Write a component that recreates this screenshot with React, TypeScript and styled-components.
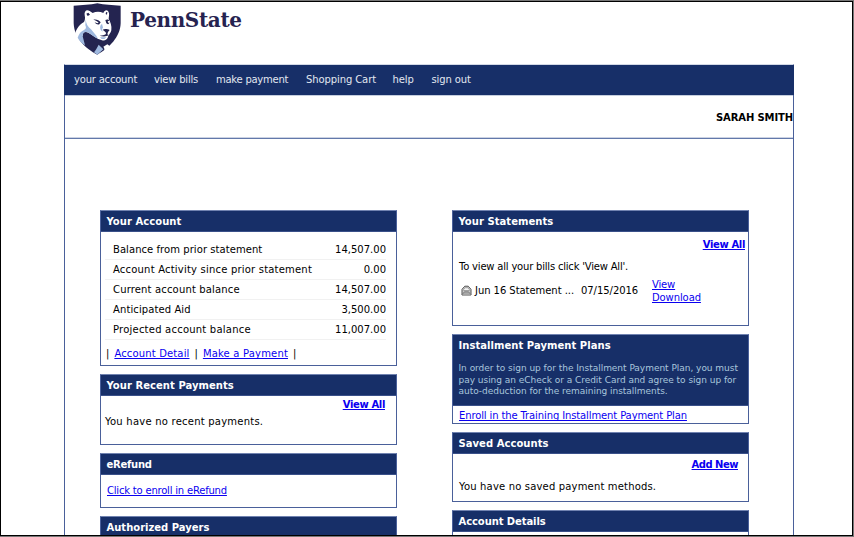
import React from 'react';
import styled, { createGlobalStyle, css } from 'styled-components';

const navy = '#172f68';
const edge = '#4a609a';

const GlobalStyle = createGlobalStyle`
  *, *::before, *::after { box-sizing: border-box; }
  html, body { margin: 0; padding: 0; background: #fff; overflow: hidden; }
  body {
    font-family: "DejaVu Sans", Verdana, sans-serif;
    font-size: 10px;
    line-height: 12px;
    color: #000;
  }
`;

const Frame = styled.div`
  height: 537px;
  border: 1px solid #777;
  border-left: 0;
`;

const Screen = styled.div`
  height: 535px;
  border: 1px solid #000;
  overflow: hidden;
  padding-left: 63px;
`;

const Brand = styled.header`
  display: flex;
  align-items: flex-start;
  height: 62px;
  padding-left: 9px;
`;

const Shield = styled.svg`
  width: 49px;
  height: 53px;
  flex: none;
`;

const Wordmark = styled.div`
  margin: 6px 0 0 8px;
  font: 700 20px/24px "DejaVu Serif", serif;
  letter-spacing: -0.36px;
  color: #262350;
`;

const Site = styled.div`
  width: 730px;
  height: 480px;
  border: 1px solid ${edge};
  border-top-color: #d3d9e6;
  border-bottom: 0;
`;

const Nav = styled.nav`
  display: flex;
  height: 30px;
  margin: 0 -1px;
  padding: 9px 0 0 10px;
  background: ${navy};
  color: #e3e8f0;
`;

const NavItem = styled.a<{ $width: number; $ls?: number }>`
  width: ${(p) => p.$width}px;
  letter-spacing: ${(p) => p.$ls ?? -0.2}px;
  white-space: nowrap;
`;

const UserBar = styled.div`
  height: 44px;
  padding-top: 16px;
  border-top: 1px solid #c5cede;
  border-bottom: 1px solid #6278aa;
  box-shadow: inset 0 -1px #ccd3e3;
  text-align: right;
  font-weight: 700;
  letter-spacing: -0.12px;
`;

const Columns = styled.main`
  display: grid;
  grid-template-columns: 297px 297px;
  column-gap: 55px;
  padding: 71px 0 0 35px;
`;

const Column = styled.div`
  display: flex;
  flex-direction: column;
  gap: 8px;
`;

const Panel = styled.section<{ $height: number }>`
  height: ${(p) => p.$height}px;
  border: 1px solid ${edge};
  border-top-color: #7183b0;
  flex: none;
`;

const PanelHead = styled.div<{ $height?: number }>`
  height: ${(p) => p.$height ?? 21}px;
  padding: 4px 0 0 5.5px;
  background: ${navy};
  border-bottom: 1px solid #3a5089;
  color: #fff;
`;

const Title = styled.h2<{ $ls?: number }>`
  margin: 0;
  font-size: 10px;
  line-height: 14px;
  font-weight: 700;
  letter-spacing: ${(p) => p.$ls ?? 0.05}px;
`;

const Note = styled.p`
  margin: 10px 0 0;
  font-size: 9px;
  line-height: 11.6px;
  letter-spacing: -0.03px;
  white-space: pre;
  color: #a9c6dc;
`;

const Line = styled.div<{ $top: number; $left?: number; $ls?: number }>`
  height: 12px;
  margin: ${(p) => p.$top}px 0 0 ${(p) => p.$left ?? 6}px;
  letter-spacing: ${(p) => p.$ls ?? 0}px;
  white-space: pre;
`;

const Link = styled.a<{ $ls?: number; $bold?: boolean }>`
  color: #0a00f0;
  text-decoration: underline;
  text-decoration-skip-ink: none;
  text-underline-offset: 1px;
  letter-spacing: ${(p) => p.$ls ?? 0}px;
  ${(p) => p.$bold && css`font-weight: 700;`}
`;

const Action = styled.div<{ $top: number; $right: number }>`
  height: 12px;
  margin: ${(p) => p.$top}px ${(p) => p.$right}px 0 0;
  text-align: right;
`;

const Balances = styled.div`
  margin: 8px 10px 0 4px;
`;

const Balance = styled.div<{ $ls: number }>`
  display: flex;
  justify-content: space-between;
  height: 20px;
  padding-left: 8px;
  border-bottom: 1px solid #f1f1f1;
  line-height: 19px;
  letter-spacing: ${(p) => p.$ls}px;
`;

const Amount = styled.span`
  letter-spacing: 0;
`;

const Separated = styled.div`
  display: flex;
  gap: 5px;
  margin: 8px 0 0 5px;
`;

const Statement = styled.div`
  display: flex;
  margin: 5px 0 0 8px;
`;

const Envelope = styled.svg`
  width: 11px;
  height: 11px;
  margin: 7px 3px 0 0;
`;

const Cell = styled.span<{ $width: number; $ls: number }>`
  width: ${(p) => p.$width}px;
  padding-top: 7px;
  letter-spacing: ${(p) => p.$ls}px;
  white-space: nowrap;
`;

const Downloads = styled.div`
  display: flex;
  flex-direction: column;
  align-items: flex-start;
  line-height: 13px;
`;

const nav: { label: string; width: number; ls?: number }[] = [
  { label: 'your account', width: 80 },
  { label: 'view bills', width: 62 },
  { label: 'make payment', width: 90, ls: -0.25 },
  { label: 'Shopping Cart', width: 86.5, ls: -0.1 },
  { label: 'help', width: 39, ls: -0.1 },
  { label: 'sign out', width: 60, ls: -0.1 },
];

const balances: [string, string, number][] = [
  ['Balance from prior statement', '14,507.00', 0.06],
  ['Account Activity since prior statement', '0.00', 0.2],
  ['Current account balance', '14,507.00', 0.16],
  ['Anticipated Aid', '3,500.00', 0.1],
  ['Projected account balance', '11,007.00', 0.22],
];

function LionShield() {
  return (
    <Shield viewBox="40 3 147 159">
      <path fill="#242450" d="M42 14C68 13 91 11 113 7C135 11 157 13 183 14V67C182 108 148 142 113 161C78 143 44 112 42 67Z" />
      <path fill="#fff" d="M44 110C46 90 56 72 73 63C76 58 77 51 75 43C73 31 80 24 90 30L99 36C109 31 121 31 131 36C135 25 145 26 147 34C150 40 147 48 147 54C152 62 157 74 155 88C152 99 147 101 145 108C142 116 136 120 127 118L116 114C107 110 98 102 86 95C74 89 68 96 69 106C62 102 58 106 60 118Z" />
      <path fill="#9fb9df" d="M78 55C79 68 84 78 94 85L110 104L115 113C105 110 95 100 84 94C74 90 68 97 69 106L76 133C66 127 58 118 54 110C58 98 64 91 73 87C80 84 80 79 77 73Z" />
      <path fill="#9fb9df" d="M117 131L131 145L113 161L103 154C108 148 112 140 117 131Z" />
      <path fill="#fff" d="M131 137L143 130L151 136L134 150C135 145 134 141 131 137Z" />
      <path fill="#242450" d="M80 38L86 35L91 41L84 45ZM139 34L143 33L142 41L138 39Z" />
      <path fill="#242450" d="M101 56C109 54 119 57 123 64L119 70C113 72 107 68 105 64L113 67L117 65C113 60 108 58 101 56ZM137 57C142 54 147 55 149 59L144 61L146 66L149 64C149 70 144 71 140 67Z" />
      <path fill="#242450" d="M129 86C134 83 144 84 150 87L145 93L143 100L148 103C140 107 128 107 120 104C128 104 134 103 139 99L138 94Z" />
      <path fill="#9fb9df" d="M122 74L127 68L130 80L127 84L129 92C123 89 120 83 122 74ZM121 109L140 109L134 114L126 114Z" />
    </Shield>
  );
}

function OpenEnvelope() {
  return (
    <Envelope viewBox="0 0 11 11">
      <path d="M1 4.3L3.8 1.2H7.2L10 4.3V10H1Z" fill="#ccc" stroke="#555" />
      <path d="M2.7 4.2L4.2 2.8H6.8L8.3 4.2V5.5H2.7Z" fill="#f4f4f4" stroke="#777" strokeWidth=".6" />
      <path d="M1 9.7L3.4 6.8H7.6L10 9.7" fill="#aaa" stroke="#666" strokeWidth=".7" />
    </Envelope>
  );
}

export default function App() {
  return (
    <>
      <GlobalStyle />
      <Frame>
        <Screen>
          <Brand>
            <LionShield />
            <Wordmark>PennState</Wordmark>
          </Brand>
          <Site>
            <Nav>
              {nav.map((n) => (
                <NavItem key={n.label} $width={n.width} $ls={n.ls}>{n.label}</NavItem>
              ))}
            </Nav>
            <UserBar>SARAH SMITH</UserBar>
            <Columns>
              <Column>
                <Panel $height={156}>
                  <PanelHead><Title>Your Account</Title></PanelHead>
                  <Balances>
                    {balances.map(([label, amount, ls]) => (
                      <Balance key={label} $ls={ls}>
                        <span>{label}</span>
                        <Amount>{amount}</Amount>
                      </Balance>
                    ))}
                  </Balances>
                  <Separated>
                    <span>|</span>
                    <Link $ls={0.15}>Account Detail</Link>
                    <span>|</span>
                    <Link $ls={0.18}>Make a Payment</Link>
                    <span>|</span>
                  </Separated>
                </Panel>
                <Panel $height={71}>
                  <PanelHead><Title>Your Recent Payments</Title></PanelHead>
                  <Action $top={3} $right={11}><Link $bold $ls={-0.35}>View All</Link></Action>
                  <Line $top={5} $left={4} $ls={0.23}>You have no recent payments.</Line>
                </Panel>
                <Panel $height={55}>
                  <PanelHead><Title $ls={-0.25}>eRefund</Title></PanelHead>
                  <Line $top={10}><Link $ls={-0.2}>Click to enroll in eRefund</Link></Line>
                </Panel>
                <Panel $height={60}>
                  <PanelHead><Title $ls={0}>Authorized Payers</Title></PanelHead>
                </Panel>
              </Column>
              <Column>
                <Panel $height={116}>
                  <PanelHead><Title>Your Statements</Title></PanelHead>
                  <Action $top={7} $right={3}><Link $bold $ls={-0.35}>View All</Link></Action>
                  <Line $top={10} $ls={-0.2}>To view all your bills click 'View All'.</Line>
                  <Statement>
                    <OpenEnvelope />
                    <Cell $width={106} $ls={-0.05}>Jun 16 Statement ...</Cell>
                    <Cell $width={71} $ls={-0.05}>07/15/2016</Cell>
                    <Downloads>
                      <Link $ls={-0.15}>View</Link>
                      <Link $ls={-0.1}>Download</Link>
                    </Downloads>
                  </Statement>
                </Panel>
                <Panel $height={90}>
                  <PanelHead $height={71}>
                    <Title>Installment Payment Plans</Title>
                    <Note>{'In order to sign up for the Installment Payment Plan, you must\npay using an eCheck or a Credit Card and agree to sign up for\nauto-deduction for the remaining installments.'}</Note>
                  </PanelHead>
                  <Line $top={4}><Link $ls={-0.12}>Enroll in the Training Installment Payment Plan</Link></Line>
                </Panel>
                <Panel $height={70}>
                  <PanelHead><Title>Saved Accounts</Title></PanelHead>
                  <Action $top={5} $right={10}><Link $bold $ls={-0.5}>Add New</Link></Action>
                  <Line $top={10} $ls={0.17}>You have no saved payment methods.</Line>
                </Panel>
                <Panel $height={60}>
                  <PanelHead><Title $ls={-0.08}>Account Details</Title></PanelHead>
                </Panel>
              </Column>
            </Columns>
          </Site>
        </Screen>
      </Frame>
    </>
  );
}
